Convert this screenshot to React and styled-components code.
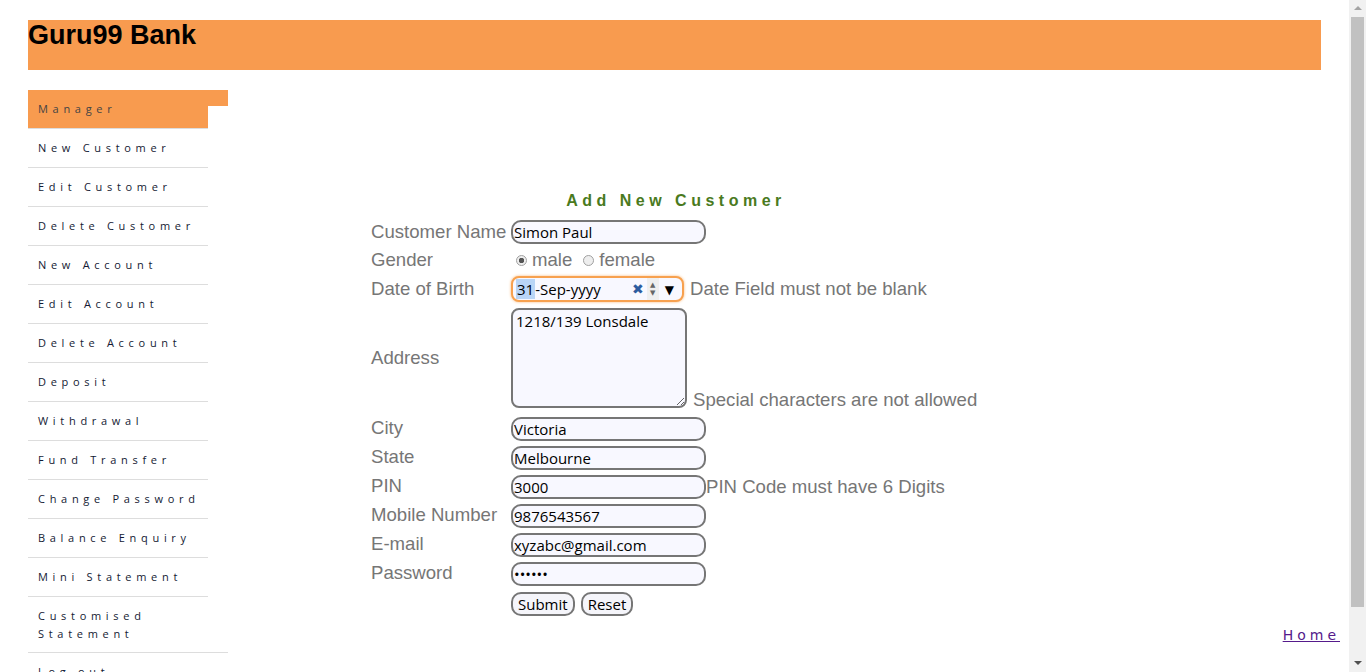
import React from 'react';
import styled, { createGlobalStyle } from 'styled-components';

const GlobalStyle = createGlobalStyle`
  html, body {
    margin: 0;
    padding: 0;
    overflow: hidden;
    background: #ffffff;
  }
`;

const Page = styled.div`
  display: flex;
  height: 672px;
  overflow: hidden;
`;

const Main = styled.div`
  flex: 1;
  padding: 20px 9px 0 28px;
  display: flex;
  flex-direction: column;
  overflow: hidden;
`;

const Header = styled.div`
  flex-shrink: 0;
  height: 50px;
  margin-right: 19px;
  background: #f89b4f;
`;

const Title = styled.h1`
  margin: 0;
  font-family: "Liberation Sans", Arial, sans-serif;
  font-size: 27px;
  line-height: 30px;
  font-weight: bold;
  color: #000000;
`;

const Body = styled.div`
  flex-shrink: 0;
  display: flex;
  margin-top: 20px;
`;

const Sidebar = styled.ul`
  width: 200px;
  margin: 0;
  padding: 0;
  list-style: none;
  flex-shrink: 0;
`;

const SidebarHead = styled.li`
  background: linear-gradient(#f89b4f, #f89b4f) top left / 100% 16px no-repeat;
`;

const MenuItem = styled.li`
  width: ${(p) => (p.$wide ? '200px' : '180px')};
  box-sizing: border-box;
  min-height: 39px;
  padding: 10px 0 9px 10px;
  border-bottom: 1px solid #dddddd;
  background: ${(p) => (p.$active ? '#f89b4f' : 'transparent')};
  color: ${(p) => (p.$active ? '#444444' : '#141a33')};
  font-family: "Open Sans", "DejaVu Sans", sans-serif;
  font-size: 11px;
  line-height: 18px;
  letter-spacing: 4.7px;
  cursor: pointer;
`;

const MenuText = styled.span`
  display: block;
  width: ${(p) => (p.$narrow ? '150px' : 'auto')};
`;

const Content = styled.div`
  flex: 1;
  display: flex;
  flex-direction: column;
  padding-left: 143px;
`;

const FormBox = styled.div`
  width: 610px;
  display: flex;
  flex-direction: column;
`;

const Heading = styled.h2`
  margin: 101px 0 0;
  text-align: center;
  font-family: "Liberation Sans", Arial, sans-serif;
  font-size: 16px;
  line-height: 20px;
  font-weight: bold;
  letter-spacing: 4.5px;
  color: #4a7a1e;
`;

const Row = styled.div`
  display: grid;
  grid-template-columns: 140px auto;
  align-items: center;
  margin-top: ${(p) => p.$gap ?? 5}px;
`;

const Label = styled.label`
  font-family: "Liberation Sans", Arial, sans-serif;
  font-size: 18.6px;
  line-height: 22px;
  color: #767676;
  margin-top: ${(p) => (p.$raise ? '-3px' : '0')};
`;

const Field = styled.div`
  display: flex;
  align-items: ${(p) => (p.$bottom ? 'flex-end' : 'center')};
  gap: ${(p) => p.$gap || 0}px;
`;

const TextInput = styled.input`
  box-sizing: border-box;
  width: 195px;
  height: 24px;
  padding: 0 0 0 1px;
  border: 2px solid #767676;
  border-radius: 10px;
  background: #f8f8ff;
  color: #000000;
  font-family: "Open Sans", "DejaVu Sans", sans-serif;
  font-size: 15px;
  outline: none;
`;

const AddressArea = styled.textarea`
  box-sizing: border-box;
  width: 176px;
  height: 100px;
  padding: 2px 3px;
  border: 2px solid #767676;
  border-radius: 8px;
  background: #f8f8ff;
  color: #000000;
  font-family: "Open Sans", "DejaVu Sans", sans-serif;
  font-size: 15px;
  line-height: 19px;
  outline: none;
`;

const Message = styled.span`
  font-family: "Liberation Sans", Arial, sans-serif;
  font-size: 18.6px;
  line-height: 22px;
  color: #767676;
  white-space: nowrap;
  margin-bottom: ${(p) => (p.$bottom ? '-3px' : '0')};
`;

const RadioGroup = styled.div`
  display: flex;
  align-items: center;
  height: 22px;
  padding-left: 5px;
`;

const Radio = styled.span`
  box-sizing: border-box;
  width: 11px;
  height: 11px;
  border-radius: 50%;
  border: 1px solid #a0a0a0;
  background: ${(p) =>
    p.$checked ? 'radial-gradient(circle, #555 0 2.5px, #eeeeee 3px)' : '#eeeeee'};
  margin-right: 5px;
`;

const RadioText = styled.span`
  font-family: "Liberation Sans", Arial, sans-serif;
  font-size: 18.6px;
  color: #767676;
  margin-right: 11px;
`;

const DateBox = styled.div`
  box-sizing: border-box;
  width: 173px;
  height: 26px;
  display: flex;
  align-items: center;
  padding: 0 3px 0 3px;
  border: 2px solid #f7a14f;
  border-radius: 8px;
  box-shadow: 0 0 3px #f8b879;
  background: #f8f8ff;
  font-family: "Open Sans", "DejaVu Sans", sans-serif;
  font-size: 15px;
  color: #000000;
`;

const Selected = styled.span`
  background: #b9d5f6;
  padding: 0 1px;
`;

const DateRest = styled.span`
  flex: 1;
`;

const ClearMark = styled.span`
  color: #2d5ca0;
  font-family: "DejaVu Sans", sans-serif;
  font-size: 14px;
  margin-right: 3px;
`;

const Spinner = styled.span`
  display: flex;
  flex-direction: column;
  align-items: center;
  justify-content: center;
  width: 12px;
  height: 22px;
  background: #efefef;
  color: #666666;
  font-size: 7px;
  line-height: 8px;
  margin-right: 6px;
`;

const DropArrow = styled.span`
  font-size: 12px;
  color: #000000;
  margin-right: 5px;
`;

const Buttons = styled.div`
  display: flex;
  gap: 6px;
`;

const Button = styled.button`
  box-sizing: border-box;
  height: 24px;
  padding: 0 5px;
  border: 2px solid #767676;
  border-radius: 10px;
  background: #f5f5fa;
  color: #000000;
  font-family: "Open Sans", "DejaVu Sans", sans-serif;
  font-size: 15px;
  line-height: 18px;
  cursor: pointer;
`;

const HomeLink = styled.a`
  align-self: flex-end;
  margin-top: 10px;
  font-family: "DejaVu Sans", sans-serif;
  font-size: 14px;
  line-height: 18px;
  letter-spacing: 4px;
  color: #551a8b;
  text-decoration: underline;
`;

const ScrollBar = styled.div`
  width: 17px;
  height: 672px;
  flex-shrink: 0;
  background: #f1f1f1;
  display: flex;
  flex-direction: column;
  align-items: center;
`;

const ArrowUp = styled.div`
  margin-top: 6px;
  width: 0;
  height: 0;
  border-left: 4px solid transparent;
  border-right: 4px solid transparent;
  border-bottom: 4px solid #a3a3a3;
`;

const Thumb = styled.div`
  margin-top: 7px;
  width: 13px;
  height: 590px;
  background: #c1c1c1;
`;

const ArrowDown = styled.div`
  margin-top: auto;
  margin-bottom: 7px;
  width: 0;
  height: 0;
  border-left: 4px solid transparent;
  border-right: 4px solid transparent;
  border-top: 4px solid #505050;
`;

const menu = [
  'New Customer',
  'Edit Customer',
  'Delete Customer',
  'New Account',
  'Edit Account',
  'Delete Account',
  'Deposit',
  'Withdrawal',
  'Fund Transfer',
  'Change Password',
  'Balance Enquiry',
  'Mini Statement',
];

const rows = [
  { label: 'City', value: 'Victoria', gap: 9 },
  { label: 'State', value: 'Melbourne' },
  { label: 'PIN', value: '3000', msg: 'PIN Code must have 6 Digits' },
  { label: 'Mobile Number', value: '9876543567' },
  { label: 'E-mail', value: 'xyzabc@gmail.com' },
  { label: 'Password', value: '123456', type: 'password' },
];

export default function App() {
  return (
    <>
      <GlobalStyle />
      <Page>
        <Main>
          <Header>
            <Title>Guru99 Bank</Title>
          </Header>
          <Body>
            <Sidebar>
              <SidebarHead>
                <MenuItem $active>Manager</MenuItem>
              </SidebarHead>
              {menu.map((m) => (
                <MenuItem key={m}>{m}</MenuItem>
              ))}
              <MenuItem $wide>
                <MenuText $narrow>Customised Statement</MenuText>
              </MenuItem>
              <MenuItem>Log out</MenuItem>
            </Sidebar>
            <Content>
              <FormBox>
                <Heading>Add New Customer</Heading>
                <Row $gap={9}>
                  <Label>Customer Name</Label>
                  <Field>
                    <TextInput defaultValue="Simon Paul" />
                  </Field>
                </Row>
                <Row>
                  <Label>Gender</Label>
                  <RadioGroup>
                    <Radio $checked />
                    <RadioText>male</RadioText>
                    <Radio />
                    <RadioText>female</RadioText>
                  </RadioGroup>
                </Row>
                <Row>
                  <Label>Date of Birth</Label>
                  <Field $gap={6}>
                    <DateBox>
                      <Selected>31</Selected>
                      <DateRest>-Sep-yyyy</DateRest>
                      <ClearMark>✖</ClearMark>
                      <Spinner>
                        <span>▲</span>
                        <span>▼</span>
                      </Spinner>
                      <DropArrow>▼</DropArrow>
                    </DateBox>
                    <Message>Date Field must not be blank</Message>
                  </Field>
                </Row>
                <Row $gap={6}>
                  <Label>Address</Label>
                  <Field $bottom $gap={6}>
                    <AddressArea defaultValue="1218/139 Lonsdale" />
                    <Message $bottom>Special characters are not allowed</Message>
                  </Field>
                </Row>
                {rows.map((r) => (
                  <Row key={r.label} $gap={r.gap}>
                    <Label $raise>{r.label}</Label>
                    <Field>
                      <TextInput type={r.type || 'text'} defaultValue={r.value} />
                      {r.msg && <Message>{r.msg}</Message>}
                    </Field>
                  </Row>
                ))}
                <Row $gap={6}>
                  <span />
                  <Buttons>
                    <Button>Submit</Button>
                    <Button>Reset</Button>
                  </Buttons>
                </Row>
              </FormBox>
              <HomeLink href="#">Home</HomeLink>
            </Content>
          </Body>
        </Main>
        <ScrollBar>
          <ArrowUp />
          <Thumb />
          <ArrowDown />
        </ScrollBar>
      </Page>
    </>
  );
}
